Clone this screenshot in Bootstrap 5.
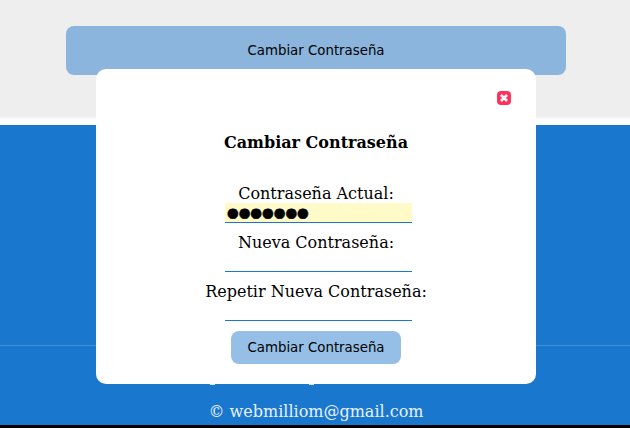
<!DOCTYPE html>
<html lang="es">
<head>
<meta charset="utf-8">
<meta name="viewport" content="width=device-width, initial-scale=1">
<title>Cambiar Contraseña</title>
<link href="https://cdn.jsdelivr.net/npm/bootstrap@5.3.0/dist/css/bootstrap.min.css" rel="stylesheet">
<style>
body{font:16px/19px "DejaVu Serif",serif;color:#000;background:#000;height:428px}
.top-panel{height:125px;padding:26px 64px 0 66px;background:linear-gradient(#eee 0 116px,#fff 120px)}
.action-btn{font:13.333px/16px "DejaVu Sans",sans-serif;color:#000;border:0;border-radius:8px;padding:0}
.action-wide{height:49px;background:#8bb5dd}
.action-send{width:170px;height:33px;margin-top:10px;background:#95bfe7}
.page-foot{height:300px;background:#1a77ce;color:#e8f1fa}
.foot-links{height:221px;border-bottom:1px solid #438dd5}
.foot-text{height:79px;padding-top:38px}
.foot-marks{gap:94px;padding-left:210px;height:2px}
.foot-marks span{width:5px;height:1px;background:#d5e5f6}
.foot-mail{padding:16px 0 0 2px}
.dialog-box{left:96px;top:69px;width:440px;height:315px;border-radius:10px;background:#fff}
.close-x{width:14px;height:14px;right:25px;top:22px}
.dialog-title{font:bold 16px/19px "DejaVu Serif",serif;margin:64px 0 32px}
.pw-field{display:block;width:187px;height:20px;margin-left:5px;border:0;border-bottom:1px solid #1a77ce;border-radius:0;padding:1px 2px;font:13.4px/17px "DejaVu Sans",sans-serif;color:#000;background:#fff;outline:0}
.pw-filled{background:#fffac8;-webkit-text-stroke:.5px #000}
.pw-label{height:19px;margin-top:10px;white-space:nowrap}
</style>
<script src="https://cdn.jsdelivr.net/npm/bootstrap@5.3.0/dist/js/bootstrap.bundle.min.js"></script>
</head>
<body class="position-relative overflow-hidden">
<main class="top-panel"><button class="action-btn action-wide w-100">Cambiar Contraseña</button></main>
<footer class="page-foot">
  <div class="foot-links"></div>
  <div class="foot-text">
    <div class="foot-marks d-flex" aria-hidden="true"><span></span><span></span></div>
    <div class="foot-mail text-center">© webmilliom@gmail.com</div>
  </div>
</footer>
<section class="dialog-box position-absolute d-flex flex-column align-items-center" role="dialog">
  <button class="close-x btn p-0 border-0 position-absolute d-flex" aria-label="Cerrar">
    <svg width="14" height="14" viewBox="0 0 14 14"><rect width="14" height="14" rx="4" fill="#fd3359"/><path d="M4 4l6 6m0-6l-6 6" stroke="#fff" stroke-width="2.5"/></svg>
  </button>
  <h1 class="dialog-title">Cambiar Contraseña</h1>
  <label class="pw-label mt-0" for="a">Contraseña Actual:</label>
  <input id="a" class="pw-field pw-filled" value="●●●●●●●">
  <label class="pw-label" for="b">Nueva Contraseña:</label>
  <input id="b" class="pw-field">
  <label class="pw-label" for="c">Repetir Nueva Contraseña:</label>
  <input id="c" class="pw-field">
  <button class="action-btn action-send">Cambiar Contraseña</button>
</section>
</body>
</html>
